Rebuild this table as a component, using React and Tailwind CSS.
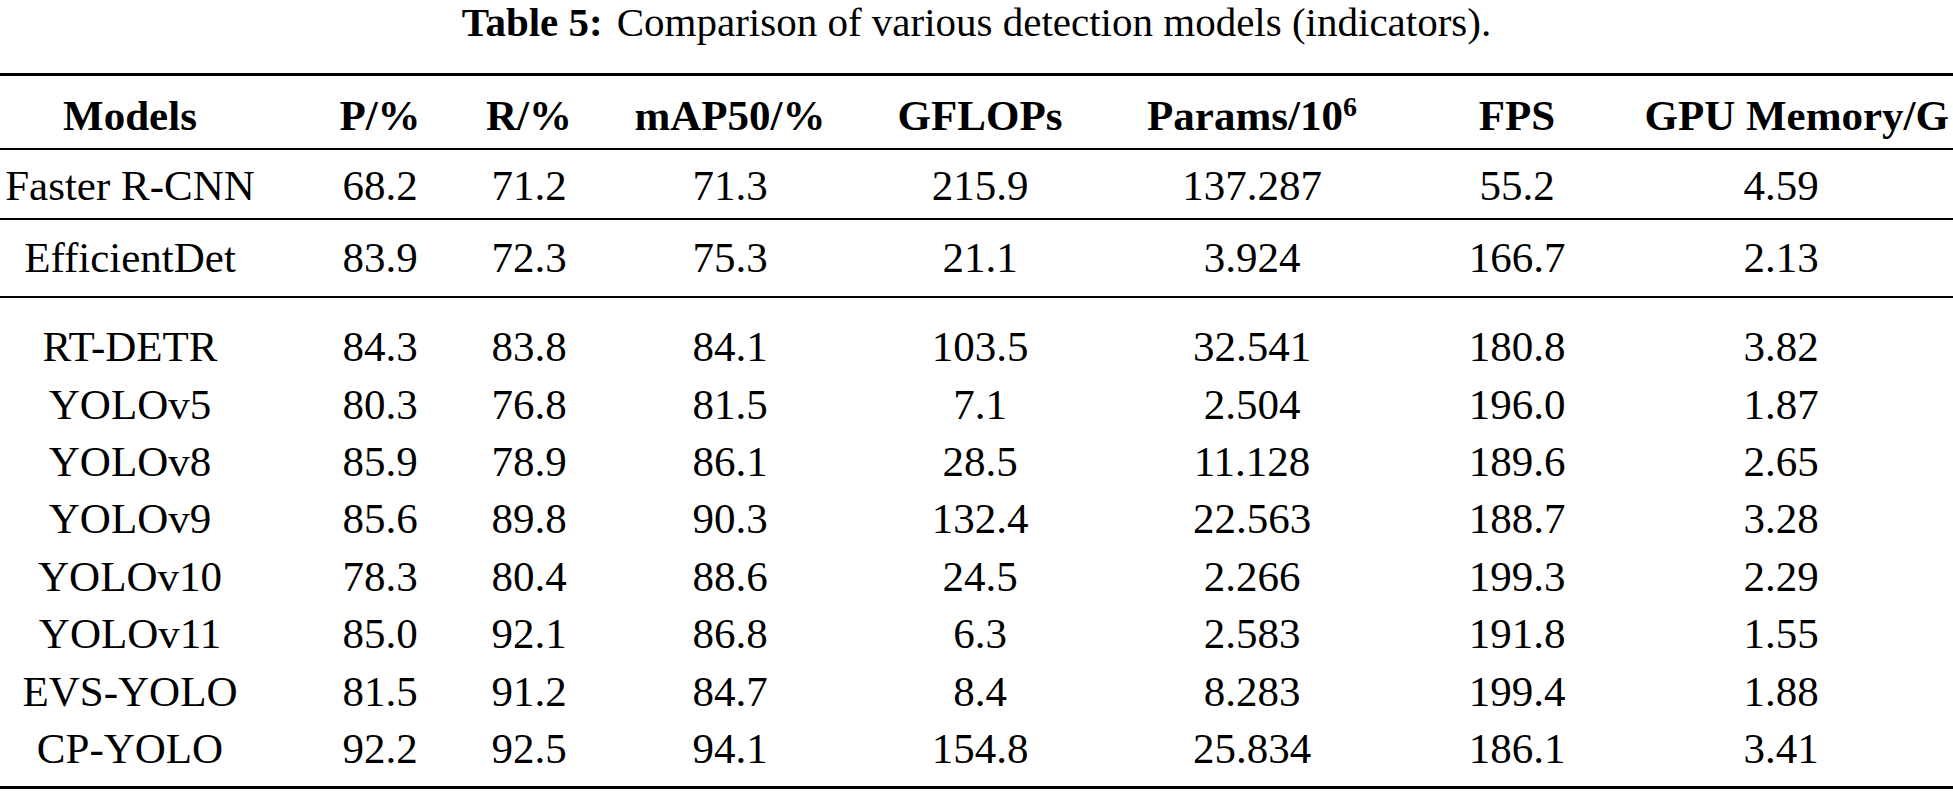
import React from 'react';

// column tracks + padding that puts each column's center where the table has it
const colClass = [
  'pl-[20px]',
  'pl-[65px]',
  'pr-[27px]',
  'pr-[25px]',
  'pr-[11px]',
  'pl-[3px]',
  '',
  'pr-[40px]',
];

const header = ['Models', 'P/%', 'R/%', 'mAP50/%', 'GFLOPs', 'PARAMS', 'FPS', 'GPU Memory/G'];

const group1 = [['Faster R-CNN', '68.2', '71.2', '71.3', '215.9', '137.287', '55.2', '4.59']];
const group2 = [['EfficientDet', '83.9', '72.3', '75.3', '21.1', '3.924', '166.7', '2.13']];
const group3 = [
  ['RT-DETR', '84.3', '83.8', '84.1', '103.5', '32.541', '180.8', '3.82'],
  ['YOLOv5', '80.3', '76.8', '81.5', '7.1', '2.504', '196.0', '1.87'],
  ['YOLOv8', '85.9', '78.9', '86.1', '28.5', '11.128', '189.6', '2.65'],
  ['YOLOv9', '85.6', '89.8', '90.3', '132.4', '22.563', '188.7', '3.28'],
  ['YOLOv10', '78.3', '80.4', '88.6', '24.5', '2.266', '199.3', '2.29'],
  ['YOLOv11', '85.0', '92.1', '86.8', '6.3', '2.583', '191.8', '1.55'],
  ['EVS-YOLO', '81.5', '91.2', '84.7', '8.4', '8.283', '199.4', '1.88'],
  ['CP-YOLO', '92.2', '92.5', '94.1', '154.8', '25.834', '186.1', '3.41'],
];

const Row = ({ cells, bold }) => (
  <div className="grid grid-cols-[240px_215px_175px_225px_261px_269px_264px_304px] h-[57.4px] leading-[57.4px]">
    {cells.map((c, i) => (
      <div
        key={i}
        className={`flex whitespace-nowrap ${
          bold && i === 7 ? 'justify-end pr-[4px]' : `justify-center ${colClass[i]}`
        } ${bold ? 'font-bold' : ''}`}
      >
        {c === 'PARAMS' ? (
          <span>
            Params/10<sup className="text-[28px]">6</sup>
          </span>
        ) : (
          c
        )}
      </div>
    ))}
  </div>
);

export default function App() {
  return (
    <div className="w-[1953px] h-[791px] bg-white text-black font-['Liberation_Serif',serif] overflow-hidden">
      {/* caption */}
      <div className="text-center text-[41px] leading-[44px] whitespace-nowrap">
        <span className="font-bold">Table 5:</span>
        <span className="ml-[14px]">Comparison of various detection models (indicators).</span>
      </div>

      <div className="mt-[29px] text-[43px]">
        <div className="border-t-[3px] border-b-[2px] border-black pt-[11px] pb-[4px]">
          <Row cells={header} bold />
        </div>
        <div className="border-b-[2px] border-black pt-[7px] pb-[3.5px]">
          {group1.map((r) => <Row key={r[0]} cells={r} />)}
        </div>
        <div className="border-b-[2px] border-black pt-[9px] pb-[9.5px]">
          {group2.map((r) => <Row key={r[0]} cells={r} />)}
        </div>
        <div className="border-b-[3px] border-black pt-[20px] pb-[9px]">
          {group3.map((r) => <Row key={r[0]} cells={r} />)}
        </div>
      </div>
    </div>
  );
}
